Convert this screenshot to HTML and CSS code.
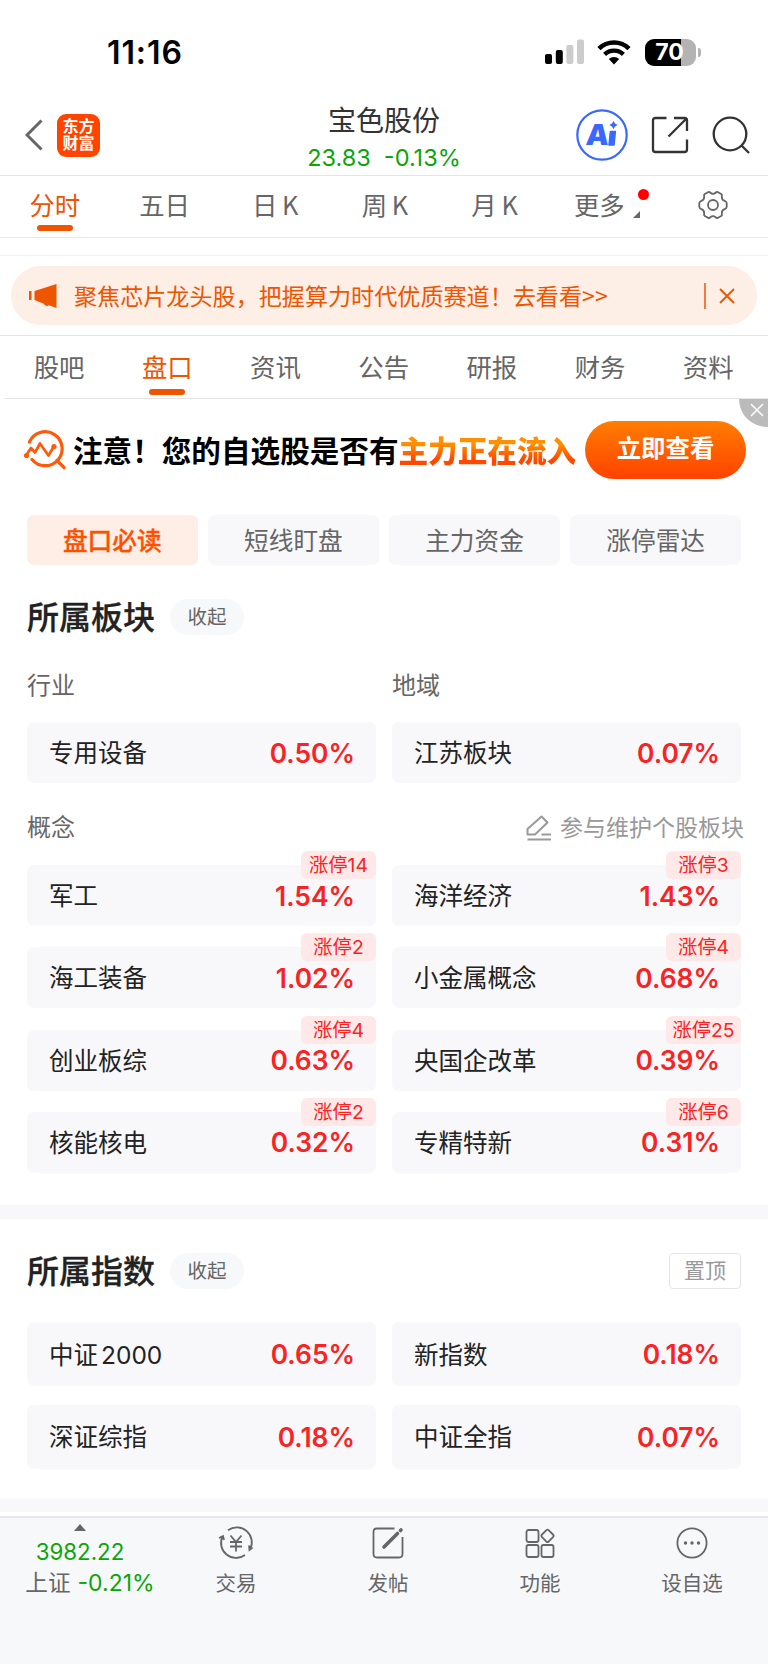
FILE: index.html
```html
<!DOCTYPE html>
<html lang="zh-CN">
<head>
    <meta charset="UTF-8">
    <meta name="viewport" content="width=device-width, initial-scale=1.0">
    <title>宝色股份</title>
    <link rel="stylesheet" href="styles.css">
</head>
<body>
    <div class="status">
        <span class="time">11:16</span>
        <svg class="signal" width="40" height="26" viewBox="0 0 40 26">
            <rect x="0" y="15" width="7" height="10" rx="2"/>
            <rect x="10.8" y="11" width="7" height="14" rx="2"/>
            <rect x="21.4" y="6" width="7" height="19" rx="2" fill="#ccc"/>
            <rect x="32" y="0.5" width="7" height="24.5" rx="2" fill="#ccc"/>
        </svg>
        <svg class="wifi" width="34" height="25" viewBox="0 0 34 25">
            <path d="M2 8.6a21.5 21.5 0 0 1 30 0" fill="none" stroke="#000" stroke-width="4.6"/>
            <path d="M7.6 14.4a13.6 13.6 0 0 1 18.8 0" fill="none" stroke="#000" stroke-width="4.4"/>
            <path d="M11.8 19a7.6 7.6 0 0 1 10.4 0L17 24.4z"/>
        </svg>
        <div class="battery"><span>70</span></div>
        <i class="cap"></i>
    </div>

    <header class="header">
        <div class="left">
            <svg width="18" height="32" viewBox="0 0 18 32" fill="none" stroke="#666" stroke-width="3"><path d="M16.5 1.5L2 16l14.5 14.5"/></svg>
            <div class="logo">东方<br>财富</div>
        </div>
        <div class="stock">
            <div class="name">宝色股份</div>
            <div class="price"><span>23.83</span><span>-0.13%</span></div>
        </div>
        <div class="right">
            <svg width="52" height="52" viewBox="0 0 52 52">
                <circle cx="26" cy="26" r="24.7" fill="none" stroke="#3a68ff" stroke-width="2.2"/>
                <text class="ai" x="9.5" y="36" transform="skewX(-5) translate(3 0)">A</text>
                <path d="M34.4 22.5h5l-1.400 13.5h-5z" fill="#3a68ff" stroke="#3a68ff" stroke-width="1.5" stroke-linejoin="round"/>
                <path d="M37.5 12l1.500 2.600 2.700 1.500-2.700 1.500-1.500 2.600-1.500-2.600-2.700-1.500 2.700-1.500z" fill="#3a68ff"/>
            </svg>
            <svg class="share" width="38" height="38" viewBox="0 0 38 38" fill="none" stroke="#333" stroke-width="2.3">
                <path d="M15.5 2H4.500Q2 2 2 4.500v29Q2 36 4.500 36h29q2.500 0 2.500-2.500V23.500M23 2h10.500Q36 2 36 4.500V15M35.500 2.500L17.500 20.500"/>
            </svg>
            <svg class="search" width="38" height="38" viewBox="0 0 38 38" fill="none" stroke="#333" stroke-width="2.3">
                <circle cx="18" cy="18" r="16.3"/><path d="M29.5 29.5l7.5 7.5"/>
            </svg>
        </div>
    </header>

    <nav class="tabs period">
        <a class="on">分时</a>
        <a>五日</a>
        <a class="k">日 K</a>
        <a class="k">周 K</a>
        <a class="k">月 K</a>
        <a class="more">更多<i class="dot"></i><i class="corner"></i></a>
        <a class="gear"><svg width="30" height="30" viewBox="0 0 30 30" fill="none" stroke="#666" stroke-width="1.8" stroke-linejoin="round">
            <path d="M10 2.200Q11.500 1.600 12.300 2.800 15 4.800 17.700 2.800 18.500 1.600 20 2.200L23.200 4Q24.400 5 23.800 6.500 23.600 9.700 26.600 10.800 28.500 11.500 28.700 13V17Q28.500 18.500 26.600 19.200 23.600 20.300 23.800 23.500 24.400 25 23.200 26L20 27.800Q18.500 28.400 17.700 27.200 15 25.200 12.300 27.200 11.500 28.400 10 27.800L6.800 26Q5.600 25 6.200 23.500 6.400 20.300 3.400 19.200 1.500 18.500 1.300 17V13Q1.500 11.500 3.400 10.800 6.400 9.700 6.200 6.500 5.600 5 6.800 4z"/>
            <circle cx="15" cy="15" r="5"/>
        </svg></a>
    </nav>
    <div class="gap"></div>

    <div class="notice-box">
        <div class="notice">
            <svg width="28" height="24" viewBox="0 0 28 24" fill="#ee5500">
                <path d="M0 7h2.500v9H0zM5.500 7L27.500 0v24L20 21.200q-3.500 2-5.500-1.700L11 18.300 5.500 16z"/>
            </svg>
            <span class="msg">聚焦芯片龙头股，把握算力时代优质赛道！去看看&gt;&gt;</span>
            <i class="bar"></i>
            <svg width="16" height="16" viewBox="0 0 16 16" stroke="#ee5500" stroke-width="1.8"><path d="M1 1l14 14M15 1L1 15"/></svg>
        </div>
    </div>

    <nav class="tabs channel">
        <a>股吧</a>
        <a class="on">盘口</a>
        <a>资讯</a>
        <a>公告</a>
        <a>研报</a>
        <a>财务</a>
        <a>资料</a>
    </nav>

    <div class="ad">
        <svg width="42" height="40" viewBox="0 0 42 40" fill="none" stroke="#ff5a0a" stroke-width="3.2" stroke-linecap="round">
            <path d="M5.500 12A17 17 0 1 1 8 29.500"/>
            <path d="M33 30.500l7 7"/>
            <path d="M2 25.500l5-7.500 4 4.500 5-9 8.500 12 5-8.500" stroke-width="2.7" stroke-linejoin="round"/>
            <circle cx="2.500" cy="25.500" r="1"/><circle cx="30" cy="16.500" r="1"/>
        </svg>
        <div class="slogan">注意！您的自选股是否有<b>主力正在流入</b></div>
        <div class="go">立即查看</div>
        <div class="close"><svg width="14" height="14" viewBox="0 0 14 14" stroke="#fff" stroke-width="1.5"><path d="M1 1l12 12M13 1L1 13"/></svg></div>
    </div>

    <div class="chips">
        <span class="on">盘口必读</span>
        <span>短线盯盘</span>
        <span>主力资金</span>
        <span>涨停雷达</span>
    </div>

    <section class="plate">
        <div class="title"><h2>所属板块</h2><span class="fold">收起</span></div>
        <div class="sub two"><span>行业</span><span>地域</span></div>
        <div class="cards">
            <div class="card"><span>专用设备</span><b>0.50%</b></div>
            <div class="card"><span>江苏板块</span><b>0.07%</b></div>
        </div>
        <div class="sub concept">
            <span>概念</span>
            <span class="edit">
                <svg width="26" height="26" viewBox="0 0 26 26" fill="none" stroke="#999" stroke-width="2" stroke-linejoin="round">
                    <path d="M1.500 19.500V14L15.500 1.500l6 6L9 19.500zM15.500 19.500H25M1.500 24.500H25"/>
                </svg>
                参与维护个股板块
            </span>
        </div>
        <div class="cards">
            <div class="card"><span>军工</span><b>1.54%</b><em>涨停14</em></div>
            <div class="card"><span>海洋经济</span><b>1.43%</b><em>涨停3</em></div>
            <div class="card"><span>海工装备</span><b>1.02%</b><em>涨停2</em></div>
            <div class="card"><span>小金属概念</span><b>0.68%</b><em>涨停4</em></div>
            <div class="card"><span>创业板综</span><b>0.63%</b><em>涨停4</em></div>
            <div class="card"><span>央国企改革</span><b>0.39%</b><em>涨停25</em></div>
            <div class="card"><span>核能核电</span><b>0.32%</b><em>涨停2</em></div>
            <div class="card"><span>专精特新</span><b>0.31%</b><em>涨停6</em></div>
        </div>
    </section>

    <section class="index">
        <div class="title"><h2>所属指数</h2><span class="fold">收起</span><span class="top">置顶</span></div>
        <div class="cards">
            <div class="card"><span>中证<i>2000</i></span><b>0.65%</b></div>
            <div class="card"><span>新指数</span><b>0.18%</b></div>
            <div class="card"><span>深证综指</span><b>0.18%</b></div>
            <div class="card"><span>中证全指</span><b>0.07%</b></div>
        </div>
    </section>

    <footer class="footer">
        <div class="market">
            <i class="up"></i>
            <div class="point">3982.22</div>
            <div class="rate">上证<span>-0.21%</span></div>
        </div>
        <div class="item">
            <svg width="36" height="34" viewBox="0 0 36 34" fill="none" stroke="#666" stroke-width="1.8">
                <path d="M10 4.200A15 15 0 0 1 32 23.500M34.500 21.500L31.500 24 31 19.500"/>
                <path d="M27 29A15 15 0 0 1 4.500 10.500M1 12l4-2 1 4"/>
                <path d="M12.500 9.500l5.500 6.500 5.500-6.500M12 16h12M12 20.500h12M18 16v9.500"/>
            </svg>
            <span>交易</span>
        </div>
        <div class="item">
            <svg width="36" height="34" viewBox="0 0 36 34" fill="none" stroke="#666" stroke-width="1.8">
                <path d="M24.500 2.500H7Q3.500 2.500 3.500 6v22q0 3.500 3.500 3.500h22q3.500 0 3.500-3.500V11"/>
                <path d="M14 21L27.500 7.500M30.500 4.500l.5-.5" stroke-width="3.600" stroke-linecap="round"/>
            </svg>
            <span>发帖</span>
        </div>
        <div class="item">
            <svg width="36" height="34" viewBox="0 0 36 34" fill="none" stroke="#666" stroke-width="1.8" stroke-linejoin="round">
                <rect x="4.500" y="4" width="12" height="12" rx="2"/>
                <rect x="4.500" y="19" width="12" height="12" rx="2"/>
                <rect x="19.500" y="19" width="12" height="12" rx="2"/>
                <rect x="20.700" y="5" width="9.600" height="9.600" rx="1.500" transform="rotate(45 25.500 9.800)"/>
            </svg>
            <span>功能</span>
        </div>
        <div class="item">
            <svg width="36" height="34" viewBox="0 0 36 34">
                <circle cx="18" cy="17" r="14.600" fill="none" stroke="#666" stroke-width="1.8"/>
                <g fill="#666"><circle cx="11.500" cy="17" r="1.700"/><circle cx="18" cy="17" r="1.700"/><circle cx="24.500" cy="17" r="1.700"/></g>
            </svg>
            <span>设自选</span>
        </div>
    </footer>
</body>
</html>
```
FILE: styles.css
```css
* {
    box-sizing: border-box;
}
body {
    margin: 0;
    width: 768px;
    height: 1665px;
    overflow: hidden;
    background: #fff;
    color: #222;
    font-family: Inter, "Noto Sans CJK SC", sans-serif;
    font-size: 24px;
}
svg {
    display: block;
    flex: none;
}
i, em {
    font-style: normal;
}

/* status bar */
.status {
    display: flex;
    align-items: center;
    height: 95px;
    padding: 9px 67px 0 107px;
}
.time {
    flex: 1;
    padding-top: 1px;
    font-size: 32px;
    font-weight: 600;
    letter-spacing: 0.9px;
    color: #000;
}
.wifi {
    margin: 0 14px 0 12px;
}
.battery {
    width: 51px;
    height: 27px;
    padding-right: 2px;
    border-radius: 9px;
    background: linear-gradient(90deg, #000 36px, #b3b3b3 36px);
    color: #fff;
    font-size: 23px;
    font-weight: 700;
    line-height: 27px;
    text-align: center;
}
.cap {
    width: 3px;
    height: 9px;
    margin-left: 2px;
    border-radius: 0 4px 4px 0;
    background: #b3b3b3;
}

/* header */
.header {
    display: grid;
    grid-template-columns: 1fr auto 1fr;
    align-items: center;
    height: 81px;
    padding: 0 18px;
    border-bottom: 1px solid #e4e4e4;
}
.left, .right {
    display: flex;
    align-items: center;
}
.left {
    padding-left: 7px;
}
.right {
    justify-content: flex-end;
}
.logo {
    width: 43px;
    height: 43px;
    margin-left: 14px;
    padding-top: 4px;
    border-radius: 9px;
    background: #ff4400;
    color: #fff;
    font-size: 16px;
    font-weight: 700;
    line-height: 17.5px;
    text-align: center;
}
.stock {
    text-align: center;
}
.name {
    margin-top: 7px;
    font-size: 28px;
    line-height: 36px;
    color: #333;
}
.price {
    display: flex;
    gap: 13px;
    justify-content: center;
    padding-top: 2px;
    font-size: 23.5px;
    line-height: 34px;
    color: #0aa50a;
}
.ai {
    fill: #3a68ff;
    font-size: 29px;
    font-weight: 900;
}
.share {
    margin: 0 23px;
}

/* tabs */
.tabs {
    display: flex;
}
.tabs a {
    display: flex;
    position: relative;
    flex: none;
    align-items: center;
    justify-content: center;
    width: 109.7px;
    color: #666;
    font-size: 25.4px;
    font-family: "Noto Sans CJK SC", sans-serif;
}
.tabs .on {
    color: #ee5500;
}
.tabs .on::after {
    content: "";
    position: absolute;
    left: 50%;
    bottom: 5px;
    width: 36px;
    height: 6px;
    margin-left: -18px;
    border-radius: 3px;
    background: #ee5500;
}
.period {
    height: 62px;
    padding-bottom: 1px;
    border-bottom: 1px solid #e8e8e8;
}
.period a {
    padding-bottom: 5px;
}
.tabs .k {
    padding-left: 2px;
    word-spacing: -1px;
}
.tabs .more {
    padding-right: 8px;
}
.tabs .gear {
    padding: 0 0 2px;
}
.dot {
    position: absolute;
    top: 13px;
    right: 9px;
    width: 11px;
    height: 11px;
    border-radius: 50%;
    background: #f00;
}
.corner {
    position: absolute;
    top: 35px;
    right: 18px;
    border-left: 7px solid transparent;
    border-bottom: 7px solid #666;
}
.gap {
    height: 18px;
    border-bottom: 1px solid #f2f2f2;
}
.notice-box {
    height: 80px;
    padding: 10px 11px 0;
    border-bottom: 1px solid #e4e4e4;
}
.notice {
    display: flex;
    align-items: center;
    height: 59px;
    padding: 0 22px 0 18px;
    border-radius: 30px;
    background: #fdeee6;
    color: #ee5500;
    font-size: 23.1px;
}
.msg {
    flex: 1;
    margin: 0 0 2px 17px;
    font-family: "Noto Sans CJK SC", sans-serif;
    white-space: nowrap;
}
.bar {
    width: 2px;
    height: 26px;
    margin-right: 13px;
    background: #f37a40;
}
.channel {
    height: 63px;
    margin-left: 5px;
    border-bottom: 1px solid #e4e4e4;
}
.channel a {
    width: 108.2px;
    padding-bottom: 2px;
}
.channel .on::after {
    bottom: 3px;
}

/* ad */
.ad {
    display: flex;
    position: relative;
    align-items: center;
    height: 101px;
    padding: 0 22px 0 24px;
}
.slogan {
    flex: 1;
    margin-left: 7px;
    color: #000;
    font-size: 29.6px;
    font-weight: 700;
    white-space: nowrap;
}
.slogan b {
    background: linear-gradient(#ff9000 30%, #ff4800 75%);
    -webkit-background-clip: text;
    background-clip: text;
    color: transparent;
}
.go {
    width: 161px;
    height: 58px;
    border-radius: 29px;
    background: linear-gradient(#ff7e00, #ff4200);
    color: #fff;
    font-size: 24.4px;
    font-weight: 700;
    line-height: 55px;
    text-align: center;
}
.close {
    position: absolute;
    top: 0;
    right: 0;
    width: 29px;
    height: 28px;
    padding: 4px 0 0 11px;
    border-bottom-left-radius: 28px;
    background: #bbb;
}

/* chips */
.chips {
    display: grid;
    grid-template-columns: repeat(4, 1fr);
    gap: 10.5px;
    padding: 15px 27px 0;
}
.chips span {
    height: 50px;
    border-radius: 7px;
    background: #f8f8fa;
    color: #666;
    font-size: 24.7px;
    line-height: 52px;
    text-align: center;
}
.chips .on {
    background: #ffeee6;
    color: #ff5000;
    font-weight: 500;
    -webkit-text-stroke: 0.3px #ff5000;
}

/* plates */
section {
    padding: 0 27px;
    border-bottom: 14px solid #f8f8fa;
}
.title {
    display: flex;
    align-items: center;
    height: 104px;
}
h2 {
    margin: 0 0 4px;
    font-size: 32px;
    font-weight: 500;
    -webkit-text-stroke: 0.3px #222;
}
.fold {
    width: 74px;
    height: 36px;
    margin-left: 15px;
    border-radius: 18px;
    background: #f7f8fa;
    color: #666;
    font-size: 19.5px;
    line-height: 37px;
    text-align: center;
}
.top {
    width: 72px;
    height: 36px;
    margin-left: auto;
    border: 1px solid #e6e6e6;
    border-radius: 4px;
    color: #999;
    font-size: 21px;
    line-height: 34px;
    text-align: center;
}
.sub {
    display: flex;
    align-items: center;
    color: #666;
    line-height: 34px;
}
.two {
    display: grid;
    grid-template-columns: 1fr 1fr;
    gap: 16px;
    height: 53px;
    padding-bottom: 21px;
}
.concept {
    justify-content: space-between;
    height: 82px;
    margin-right: -3px;
    padding-top: 8px;
}
.edit {
    display: flex;
    align-items: center;
    gap: 8px;
    color: #999;
    font-size: 23px;
}
.cards {
    display: grid;
    grid-template-columns: 1fr 1fr;
    gap: 21.3px 16px;
}
.card {
    display: flex;
    position: relative;
    align-items: center;
    justify-content: space-between;
    height: 61px;
    padding: 0 21px 0 22px;
    border-radius: 7px;
    background: #f8f8fa;
    font-size: 24.5px;
}
.card span {
    padding-bottom: 2px;
}
.card b {
    color: #fa2323;
    font-size: 26.4px;
    font-weight: 600;
}
.card i {
    margin-left: 3px;
}
.card em {
    position: absolute;
    top: -14px;
    right: 0;
    width: 75px;
    height: 28px;
    border-radius: 6px;
    background: #ffe8e8;
    color: #fa2323;
    font-size: 19.3px;
    line-height: 29.5px;
    text-align: center;
}
.plate {
    height: 654px;
}
.index {
    height: 293px;
}
.index .card {
    height: 64px;
}
.index .cards {
    row-gap: 18.5px;
    margin-top: -1px;
}

/* bottom bar */
.footer {
    display: flex;
    height: 148px;
    margin-top: 4px;
    border-top: 2px solid #e6e8ea;
    background: #f7f8fa;
    color: #666;
}
.market {
    display: flex;
    flex-direction: column;
    align-items: center;
    width: 160px;
    padding-top: 6px;
}
.up {
    border: 6px solid transparent;
    border-top: 0;
    border-bottom: 7px solid #666;
}
.point, .rate span {
    color: #0aa50a;
}
.point {
    margin-top: 5px;
    font-size: 22.3px;
    line-height: 32px;
}
.rate {
    padding-left: 20px;
    font-size: 22.6px;
    line-height: 30px;
    white-space: nowrap;
}
.rate span {
    margin-left: 7px;
    font-size: 23px;
}
.item {
    display: flex;
    flex-direction: column;
    align-items: center;
    width: 152px;
    padding-top: 8px;
    font-size: 20.5px;
}
.item span {
    margin-top: 8px;
    line-height: 31px;
}
```
